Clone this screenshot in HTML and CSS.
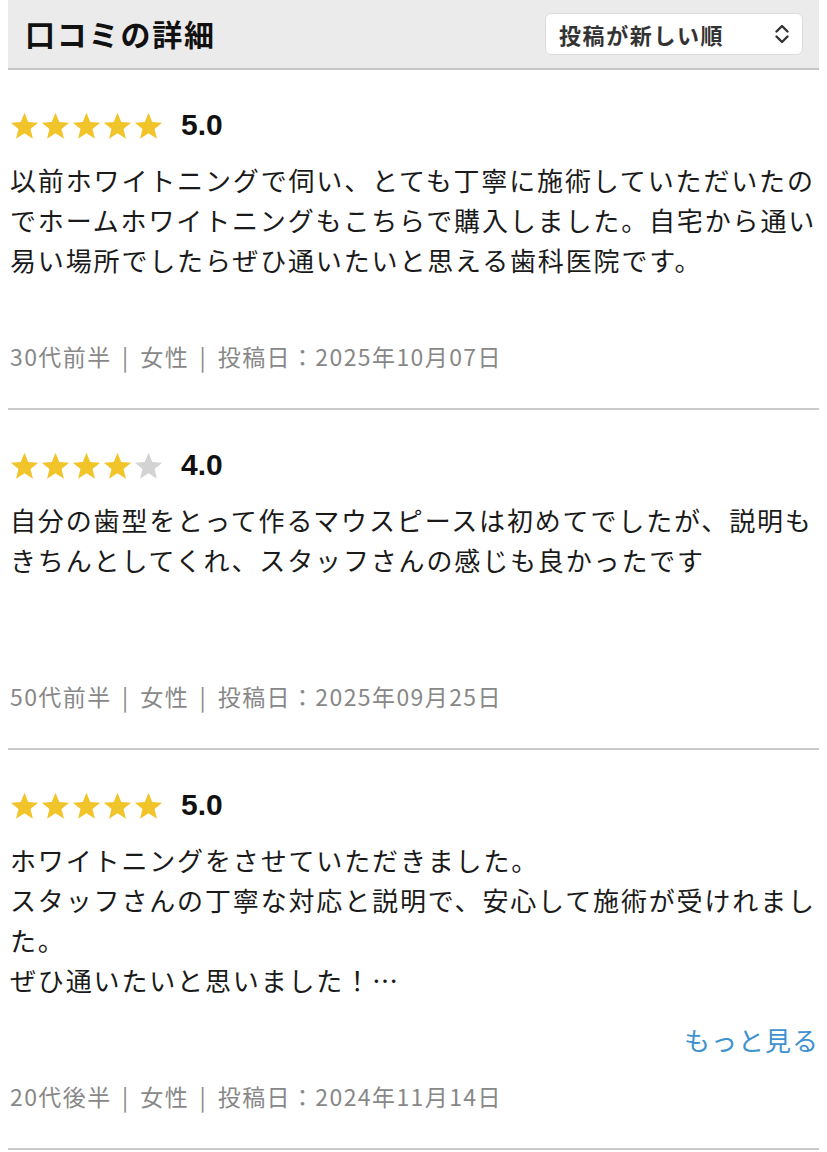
FILE: index.html
```html
<!DOCTYPE html>
<html lang="ja">
<head>
<meta charset="utf-8">
<title>口コミの詳細</title>
<link rel="stylesheet" href="styles.css">
</head>
<body>
<div class="page">
  <header class="head">
    <h1 class="title">口コミの詳細</h1>
    <div class="sort">
      <span class="sort-label">投稿が新しい順</span>
      <svg class="sort-icon" width="16" height="22" viewBox="0 0 16 22"><path d="M2.5 8.5 L8 3 L13.5 8.5 M2.5 13.5 L8 19 L13.5 13.5" fill="none" stroke="#333" stroke-width="2.4" stroke-linecap="round" stroke-linejoin="round"/></svg>
    </div>
  </header>

  <article class="review">
    <div class="rating">
      <div class="stars">
        <svg class="star on" viewBox="0 0 24 24"><path d="M12 1.5l3.1 7.6 8.2.6-6.3 5.2 2 8-7-4.4-7 4.4 2-8L.7 9.7l8.2-.6z"/></svg>
        <svg class="star on" viewBox="0 0 24 24"><path d="M12 1.5l3.1 7.6 8.2.6-6.3 5.2 2 8-7-4.4-7 4.4 2-8L.7 9.7l8.2-.6z"/></svg>
        <svg class="star on" viewBox="0 0 24 24"><path d="M12 1.5l3.1 7.6 8.2.6-6.3 5.2 2 8-7-4.4-7 4.4 2-8L.7 9.7l8.2-.6z"/></svg>
        <svg class="star on" viewBox="0 0 24 24"><path d="M12 1.5l3.1 7.6 8.2.6-6.3 5.2 2 8-7-4.4-7 4.4 2-8L.7 9.7l8.2-.6z"/></svg>
        <svg class="star on" viewBox="0 0 24 24"><path d="M12 1.5l3.1 7.6 8.2.6-6.3 5.2 2 8-7-4.4-7 4.4 2-8L.7 9.7l8.2-.6z"/></svg>
      </div>
      <span class="score">5.0</span>
    </div>
    <p class="body">以前ホワイトニングで伺い、とても丁寧に施術していただいたのでホームホワイトニングもこちらで購入しました。自宅から通い易い場所でしたらぜひ通いたいと思える歯科医院です。</p>
    <p class="meta">30代前半 | 女性 | 投稿日：2025年10月07日</p>
  </article>

  <article class="review">
    <div class="rating">
      <div class="stars">
        <svg class="star on" viewBox="0 0 24 24"><path d="M12 1.5l3.1 7.6 8.2.6-6.3 5.2 2 8-7-4.4-7 4.4 2-8L.7 9.7l8.2-.6z"/></svg>
        <svg class="star on" viewBox="0 0 24 24"><path d="M12 1.5l3.1 7.6 8.2.6-6.3 5.2 2 8-7-4.4-7 4.4 2-8L.7 9.7l8.2-.6z"/></svg>
        <svg class="star on" viewBox="0 0 24 24"><path d="M12 1.5l3.1 7.6 8.2.6-6.3 5.2 2 8-7-4.4-7 4.4 2-8L.7 9.7l8.2-.6z"/></svg>
        <svg class="star on" viewBox="0 0 24 24"><path d="M12 1.5l3.1 7.6 8.2.6-6.3 5.2 2 8-7-4.4-7 4.4 2-8L.7 9.7l8.2-.6z"/></svg>
        <svg class="star off" viewBox="0 0 24 24"><path d="M12 1.5l3.1 7.6 8.2.6-6.3 5.2 2 8-7-4.4-7 4.4 2-8L.7 9.7l8.2-.6z"/></svg>
      </div>
      <span class="score">4.0</span>
    </div>
    <p class="body">自分の歯型をとって作るマウスピースは初めてでしたが、説明もきちんとしてくれ、スタッフさんの感じも良かったです</p>
    <p class="meta">50代前半 | 女性 | 投稿日：2025年09月25日</p>
  </article>

  <article class="review">
    <div class="rating">
      <div class="stars">
        <svg class="star on" viewBox="0 0 24 24"><path d="M12 1.5l3.1 7.6 8.2.6-6.3 5.2 2 8-7-4.4-7 4.4 2-8L.7 9.7l8.2-.6z"/></svg>
        <svg class="star on" viewBox="0 0 24 24"><path d="M12 1.5l3.1 7.6 8.2.6-6.3 5.2 2 8-7-4.4-7 4.4 2-8L.7 9.7l8.2-.6z"/></svg>
        <svg class="star on" viewBox="0 0 24 24"><path d="M12 1.5l3.1 7.6 8.2.6-6.3 5.2 2 8-7-4.4-7 4.4 2-8L.7 9.7l8.2-.6z"/></svg>
        <svg class="star on" viewBox="0 0 24 24"><path d="M12 1.5l3.1 7.6 8.2.6-6.3 5.2 2 8-7-4.4-7 4.4 2-8L.7 9.7l8.2-.6z"/></svg>
        <svg class="star on" viewBox="0 0 24 24"><path d="M12 1.5l3.1 7.6 8.2.6-6.3 5.2 2 8-7-4.4-7 4.4 2-8L.7 9.7l8.2-.6z"/></svg>
      </div>
      <span class="score">5.0</span>
    </div>
    <p class="body">ホワイトニングをさせていただきました。<br>スタッフさんの丁寧な対応と説明で、安心して施術が受けれました。<br>ぜひ通いたいと思いました！…</p>
    <div class="more-row"><a class="more" href="#">もっと見る</a></div>
    <p class="meta">20代後半 | 女性 | 投稿日：2024年11月14日</p>
  </article>
</div>
</body>
</html>
```

FILE: styles.css
```css
* { box-sizing: border-box; }
html, body { margin: 0; padding: 0; background: #fff; }
body {
  font-family: "Noto Sans CJK JP", "Noto Sans", sans-serif;
  color: #1a1a1a;
}
.page { margin: 0 8px; }

.head {
  height: 70px;
  background: #ebebeb;
  border-bottom: 2px solid #c6c6c6;
  display: flex;
  align-items: center;
  justify-content: space-between;
  padding: 0 16px 2px 17px;
}
.title {
  margin: 0;
  font-size: 30px;
  font-weight: 700;
  letter-spacing: 1.8px;
  color: #111;
  line-height: 1;
}
.sort {
  width: 258px;
  height: 42px;
  background: #fff;
  border: 1px solid #dcdcdc;
  border-radius: 6px;
  display: flex;
  align-items: center;
  justify-content: space-between;
  padding: 0 12px 0 13px;
  margin-top: 2px;
}
.sort-label {
  font-size: 22px;
  font-weight: 700;
  color: #333;
  letter-spacing: 1.6px;
}
.sort-icon { display: block; }

.review {
  border-bottom: 2px solid #cbcbcb;
  padding: 39px 0 37px 2px;
}
.rating {
  display: flex;
  align-items: center;
  height: 32px;
}
.stars { display: flex; gap: 2px; }
.star { width: 29px; height: 29px; display: block; }
.star.on { fill: #f1c52a; }
.star.off { fill: #d3d3d3; }
.score {
  margin-left: 18px;
  font-family: "Liberation Sans", Arial, sans-serif;
  font-size: 30px;
  font-weight: 700;
  color: #111;
}
.body {
  margin: 19px 0 0;
  font-size: 26px;
  line-height: 40px;
  letter-spacing: 1.85px;
  min-height: 160px;
  color: #1a1a1a;
}
.more-row {
  display: flex;
  justify-content: flex-end;
  margin-top: 20px;
  margin-bottom: 5px;
}
.more {
  font-size: 26px;
  line-height: 40px;
  color: #3e92cf;
  text-decoration: none;
  letter-spacing: 1px;
}
.meta {
  margin: 21px 0 0;
  font-size: 23px;
  line-height: 30px;
  color: #888;
  letter-spacing: 1.4px;
  word-spacing: 4px;
}
```
